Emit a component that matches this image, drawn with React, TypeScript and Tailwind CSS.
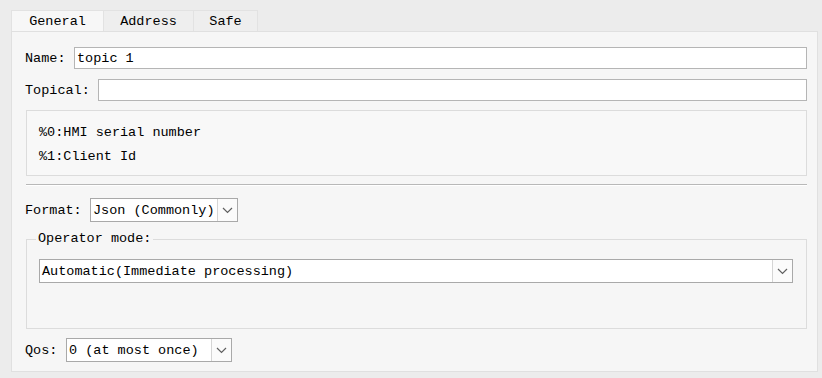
import React from "react";

const font = { fontFamily: '"Liberation Mono", "DejaVu Sans Mono", monospace' };

function Arrow() {
  return (
    <div className="flex h-full w-[20px] items-center justify-center border-l border-[#d5d5d5] bg-[#fbfbfb]">
      <svg width="11" height="7" viewBox="0 0 11 7">
        <path d="M1 1 L5.5 5.5 L10 1" fill="none" stroke="#606060" strokeWidth="1.2" />
      </svg>
    </div>
  );
}

function Select({ text, w }: { text: string; w: string }) {
  return (
    <div className={`flex h-[24px] ${w} items-stretch border border-[#a9a9a9] bg-white`}>
      <div className="flex flex-1 items-center pl-[2px] pt-[2px] text-[13.5px] text-black">{text}</div>
      <Arrow />
    </div>
  );
}

export default function App() {
  return (
    <div className="h-[378px] w-[822px] bg-[#ececec] pl-[11px] pt-[10px]" style={font}>
      <div className="flex h-[21px] text-[13.5px] text-black">
        <div className="flex w-[92px] items-center justify-center border-l border-t border-[#e2e2e2] bg-[#f7f7f7] pt-[2px]">General</div>
        <div className="flex w-[90px] items-center justify-center border-l border-t border-[#e2e2e2] bg-[#eeeeee] pt-[2px]">Address</div>
        <div className="flex w-[65px] items-center justify-center border-x border-t border-[#e2e2e2] bg-[#eeeeee] pt-[2px]">Safe</div>
      </div>
      <div className="h-[341px] w-[807px] border border-[#e0e0e0] bg-[#f6f6f6] pl-[13px] pr-[10px] pt-[15px] text-[13.5px] text-black">
        <div className="flex h-[22px] items-center">
          <span className="w-[49px] pt-[2px]">Name:</span>
          <div className="flex h-[22px] flex-1 items-center border border-[#b5b5b5] bg-white pl-[2px] pt-[2px]">topic 1</div>
        </div>
        <div className="mt-[10px] flex h-[22px] items-center">
          <span className="w-[73px] pt-[2px]">Topical:</span>
          <div className="h-[22px] flex-1 border border-[#b5b5b5] bg-white" />
        </div>
        <div className="ml-[1px] mt-[9px] flex h-[66px] flex-col justify-center gap-[6px] border border-[#dcdcdc] bg-[#f8f8f8] pl-[12px] pt-[3px] leading-[18px]">
          <div>%0:HMI serial number</div>
          <div>%1:Client Id</div>
        </div>
        <div className="ml-[1px] mt-[8px] border-t border-b border-t-[#b8b8b8] border-b-white" />
        <div className="mt-[12px] flex items-center">
          <span className="w-[65px] pt-[2px]">Format:</span>
          <Select text="Json (Commonly)" w="w-[148px]" />
        </div>
        <div className="relative ml-[1px] mt-[17px] h-[90px] border border-[#dcdcdc]">
          <span className="absolute left-[9px] top-[-9px] bg-[#f6f6f6] px-[2px] leading-[16px]">Operator mode:</span>
          <div className="ml-[12px] mr-[13px] mt-[19px]">
            <Select text="Automatic(Immediate processing)" w="w-full" />
          </div>
        </div>
        <div className="mt-[9px] flex items-center">
          <span className="w-[41px] pt-[2px]">Qos:</span>
          <Select text="0 (at most once)" w="w-[166px]" />
        </div>
      </div>
    </div>
  );
}
